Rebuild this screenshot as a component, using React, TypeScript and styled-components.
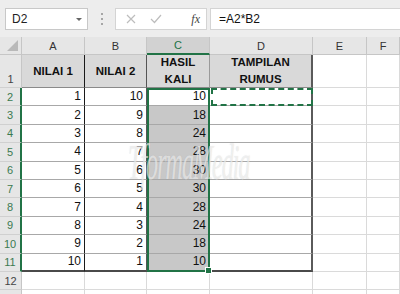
import React from "react";
import styled, { createGlobalStyle } from "styled-components";

const GlobalStyle = createGlobalStyle`
  html, body {
    margin: 0;
    padding: 0;
    background: #ffffff;
    overflow: hidden;
  }
  body {
    font-family: "Liberation Sans", Arial, sans-serif;
  }
`;

const GREEN = "#217346";
const GRID = "#dadada";
const ROW_H = 18.4;

const Screen = styled.div`
  width: 400px;
  height: 294px;
  overflow: hidden;
  display: flex;
  flex-direction: column;
`;

const Toolbar = styled.div`
  height: 37px;
  flex: none;
  background: #ededed;
  display: flex;
  align-items: flex-start;
  padding: 8px 0 0 5px;
  box-sizing: border-box;
`;

const NameBox = styled.div`
  width: 83px;
  height: 22px;
  box-sizing: border-box;
  background: #fff;
  border: 1px solid #c8c8c8;
  display: flex;
  align-items: center;
  justify-content: space-between;
  padding: 0 5px 0 6px;
  font-size: 12px;
  color: #222;
`;

const DropArrow = styled.span`
  width: 0;
  height: 0;
  border-left: 3px solid transparent;
  border-right: 3px solid transparent;
  border-top: 3px solid #666;
`;

const Grip = styled.div`
  width: 27px;
  height: 22px;
  display: flex;
  flex-direction: column;
  align-items: center;
  justify-content: center;
  gap: 3px;
  span {
    width: 2px;
    height: 2px;
    background: #a6a6a6;
  }
`;

const FxBox = styled.div`
  width: 92px;
  height: 22px;
  box-sizing: border-box;
  background: #fff;
  border: 1px solid #d4d4d4;
  display: flex;
  align-items: center;
  padding: 0 6px 0 10px;
  gap: 14px;
  color: #c2c2c2;
`;

const FxLabel = styled.span`
  font-family: "Liberation Serif", "Times New Roman", serif;
  font-style: italic;
  font-size: 12px;
  color: #444;
  margin-left: auto;
`;

const FormulaInput = styled.div`
  flex: 1;
  height: 22px;
  margin-left: 3px;
  box-sizing: border-box;
  background: #fff;
  border: 1px solid #d4d4d4;
  border-right: none;
  display: flex;
  align-items: center;
  padding-left: 8px;
  font-size: 12px;
  color: #111;
`;

const Sheet = styled.div`
  position: relative;
  flex: 1;
  display: grid;
  grid-template-columns: 22px 63px 62px 63px 103px 54px 1fr;
  grid-template-rows: 18px 33px repeat(12, ${ROW_H}px);
`;

const Corner = styled.div`
  background: #e6e6e6;
  border-right: 1px solid #c6c6c6;
  border-bottom: 1px solid #c6c6c6;
  box-sizing: border-box;
  position: relative;
  &::after {
    content: "";
    position: absolute;
    right: 3px;
    bottom: 3px;
    width: 0;
    height: 0;
    border-left: 11px solid transparent;
    border-bottom: 11px solid #b9b9b9;
  }
`;

const ColHeader = styled.div<{ $sel?: boolean }>`
  background: ${(p) => (p.$sel ? "#d2d2d2" : "#e6e6e6")};
  color: ${(p) => (p.$sel ? GREEN : "#333")};
  border-right: 1px solid #c6c6c6;
  border-bottom: ${(p) => (p.$sel ? `2px solid ${GREEN}` : "1px solid #c6c6c6")};
  box-sizing: border-box;
  display: flex;
  align-items: center;
  justify-content: center;
  font-size: 11px;
`;

const RowHeader = styled.div<{ $sel?: boolean; $bottom?: boolean }>`
  background: #e6e6e6;
  color: ${(p) => (p.$sel ? "#3b7a50" : "#444")};
  border-right: ${(p) => (p.$sel ? `2px solid ${GREEN}` : "1px solid #c6c6c6")};
  border-bottom: 1px solid #d0d0d0;
  box-sizing: border-box;
  display: flex;
  align-items: ${(p) => (p.$bottom ? "flex-end" : "center")};
  justify-content: center;
  padding-bottom: ${(p) => (p.$bottom ? "2px" : "0")};
  font-size: 11px;
`;

const Cell = styled.div<{
  $fill?: string;
  $right?: string;
  $bottom?: string;
  $head?: boolean;
}>`
  background: ${(p) => p.$fill ?? "#fff"};
  border-right: ${(p) => p.$right ?? `1px solid ${GRID}`};
  border-bottom: ${(p) => p.$bottom ?? `1px solid ${GRID}`};
  box-sizing: border-box;
  display: flex;
  align-items: center;
  justify-content: ${(p) => (p.$head ? "center" : "flex-end")};
  text-align: center;
  padding: ${(p) => (p.$head ? "0 2px" : "0 3px 0 0")};
  font-size: ${(p) => (p.$head ? "11.5px" : "12px")};
  font-weight: ${(p) => (p.$head ? 700 : 400)};
  line-height: ${(p) => (p.$head ? "17px" : "15px")};
  color: #111;
`;

const Selection = styled.div`
  position: absolute;
  left: 147px;
  top: 51px;
  width: 63px;
  height: ${ROW_H * 10}px;
  box-sizing: border-box;
  border: 2px solid ${GREEN};
  pointer-events: none;
  &::after {
    content: "";
    position: absolute;
    right: -4px;
    bottom: -4px;
    width: 5px;
    height: 5px;
    background: ${GREEN};
    border: 1px solid #fff;
  }
`;

const CopyMarquee = styled.div`
  position: absolute;
  left: 211px;
  top: 51px;
  width: 102px;
  height: ${ROW_H}px;
  box-sizing: border-box;
  border: 2px dashed ${GREEN};
  pointer-events: none;
`;

const Watermark = styled.div`
  position: absolute;
  left: 128px;
  top: 96px;
  font-family: "Liberation Serif", serif;
  font-style: italic;
  font-size: 50px;
  letter-spacing: -2px;
  color: rgba(255, 255, 255, 0.55);
  text-shadow: 0 0 1px rgba(150, 150, 150, 0.35);
  transform: scaleX(0.48);
  transform-origin: left top;
  pointer-events: none;
`;

const rows: [number, number, number][] = [
  [1, 10, 10],
  [2, 9, 18],
  [3, 8, 24],
  [4, 7, 28],
  [5, 6, 30],
  [6, 5, 30],
  [7, 4, 28],
  [8, 3, 24],
  [9, 2, 18],
  [10, 1, 10],
];

const A_RIGHT = "1px solid #1a1a1a";
const B_RIGHT = "1px solid #555";
const C_RIGHT = "1px solid #9a9a9a";
const D_RIGHT = "2px solid #5a5a5a";
const HEAD_FILL = "#d9d9d9";
const HEAD_BOTTOM = "1px solid #8a8a8a";

function EmptyRow({ label }: { label?: string }) {
  return (
    <>
      <RowHeader>{label}</RowHeader>
      <Cell />
      <Cell />
      <Cell />
      <Cell />
      <Cell />
      <Cell />
    </>
  );
}

export default function App() {
  return (
    <Screen>
      <GlobalStyle />
      <Toolbar>
        <NameBox>
          D2
          <DropArrow />
        </NameBox>
        <Grip>
          <span />
          <span />
          <span />
        </Grip>
        <FxBox>
          <svg width="10" height="10" viewBox="0 0 10 10">
            <path d="M1 1 L9 9 M9 1 L1 9" stroke="#bdbdbd" strokeWidth="1.2" />
          </svg>
          <svg width="12" height="10" viewBox="0 0 12 10">
            <path d="M1 5 L4.5 8.5 L11 1" stroke="#bdbdbd" strokeWidth="1.2" fill="none" />
          </svg>
          <FxLabel>fx</FxLabel>
        </FxBox>
        <FormulaInput>=A2*B2</FormulaInput>
      </Toolbar>

      <Sheet>
        <Corner />
        <ColHeader>A</ColHeader>
        <ColHeader>B</ColHeader>
        <ColHeader $sel>C</ColHeader>
        <ColHeader>D</ColHeader>
        <ColHeader>E</ColHeader>
        <ColHeader>F</ColHeader>

        <RowHeader $bottom>1</RowHeader>
        <Cell $head $fill={HEAD_FILL} $right={A_RIGHT} $bottom={HEAD_BOTTOM}>
          NILAI 1
        </Cell>
        <Cell $head $fill={HEAD_FILL} $right={B_RIGHT} $bottom={HEAD_BOTTOM}>
          NILAI 2
        </Cell>
        <Cell $head $fill={HEAD_FILL} $right={C_RIGHT} $bottom={HEAD_BOTTOM}>
          HASIL
          <br />
          KALI
        </Cell>
        <Cell $head $fill={HEAD_FILL} $right={D_RIGHT} $bottom={HEAD_BOTTOM}>
          TAMPILAN
          <br />
          RUMUS
        </Cell>
        <Cell />
        <Cell />

        {rows.map(([a, b, c], i) => {
          const last = i === rows.length - 1;
          const bottom = last ? "2px solid #4a4a4a" : "1px solid #a8a8a8";
          return (
            <React.Fragment key={i}>
              <RowHeader $sel>{i + 2}</RowHeader>
              <Cell $right={A_RIGHT} $bottom={bottom}>
                {a}
              </Cell>
              <Cell $right={B_RIGHT} $bottom={bottom}>
                {b}
              </Cell>
              <Cell
                $fill={i === 0 ? "#fff" : "#c8c8c8"}
                $right={C_RIGHT}
                $bottom={bottom}
              >
                {c}
              </Cell>
              <Cell $right={D_RIGHT} $bottom={bottom} />
              <Cell />
              <Cell />
            </React.Fragment>
          );
        })}

        <EmptyRow label="12" />
        <EmptyRow />

        <Selection />
        <CopyMarquee />
        <Watermark>TformaMedia</Watermark>
      </Sheet>
    </Screen>
  );
}
